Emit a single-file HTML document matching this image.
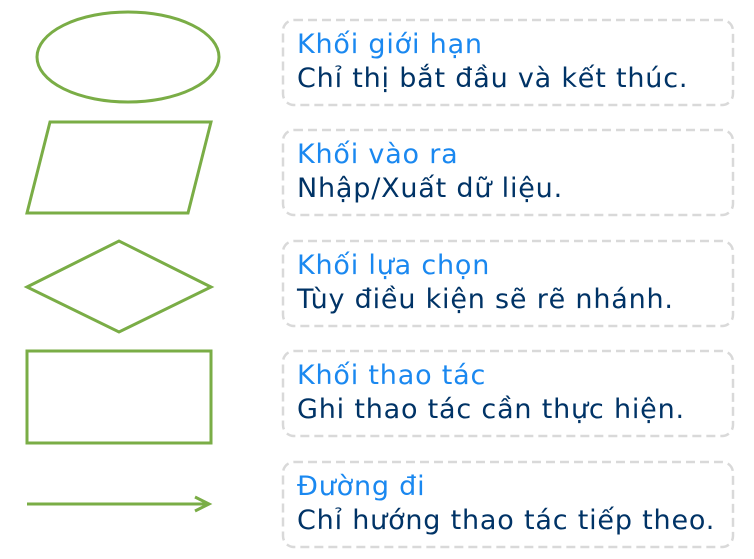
<!DOCTYPE html>
<html><head><meta charset="utf-8"><style>
body{margin:0;width:754px;height:559px;background:#fff;overflow:hidden;position:relative;font-family:"DejaVu Sans","Liberation Sans",sans-serif}
.t{position:absolute;left:297px;font-size:27px;letter-spacing:0.8px;line-height:34px;color:#003366;white-space:nowrap}
.t span{color:#1a88f0}
svg{position:absolute;left:0;top:0}
</style></head><body>
<svg width="754" height="559" fill="none">
<g stroke="#7aad46" stroke-width="3">
<ellipse cx="128" cy="57" rx="91" ry="45"/>
<polygon points="50,122 211,122 188,213 27,213"/>
<polygon points="27,287 119,241 211,287 119,332"/>
<rect x="27" y="351" width="184" height="92"/>
<line x1="27" y1="504" x2="208" y2="504"/>
<polyline points="195,497 209,504 195,511"/>
</g>
<g stroke="#d9d9d9" stroke-width="2.5" stroke-dasharray="9 5">
<rect x="283" y="20" width="450" height="85" rx="11"/>
<rect x="283" y="130" width="450" height="85" rx="11"/>
<rect x="283" y="241" width="450" height="85" rx="11"/>
<rect x="283" y="351" width="450" height="85" rx="11"/>
<rect x="283" y="462" width="450" height="85" rx="11"/>
</g>
</svg>
<div class="t" style="top:28px"><span>Khối giới hạn</span><br>Chỉ thị bắt đầu và kết thúc.</div>
<div class="t" style="top:138px"><span>Khối vào ra</span><br>Nhập/Xuất dữ liệu.</div>
<div class="t" style="top:249px"><span>Khối lựa chọn</span><br>Tùy điều kiện sẽ rẽ nhánh.</div>
<div class="t" style="top:359px"><span>Khối thao tác</span><br>Ghi thao tác cần thực hiện.</div>
<div class="t" style="top:470px"><span>Đường đi</span><br>Chỉ hướng thao tác tiếp theo.</div>
</body></html>
